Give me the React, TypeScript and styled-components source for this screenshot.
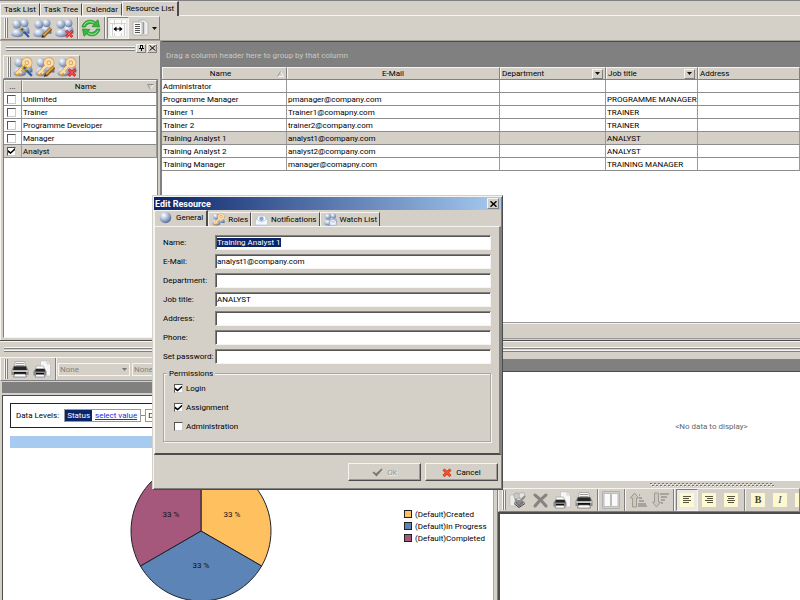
import React, { useEffect, useId, useRef, useState } from "react";
import styled, { createGlobalStyle, css } from "styled-components";

const face = "#d4d0c8";
const shadow = "#808080";
const dark = "#4c4c4c";
const light = "#f6f4f0";
const navy = "#0a246a";
const sky = "#a6caf0";

const GlobalStyle = createGlobalStyle`
  *, *::before, *::after { box-sizing: border-box; }
  html, body { margin: 0; }
  body, button, input, select {
    font-family: Roboto, "Liberation Sans", sans-serif;
    font-size: 8px;
    line-height: 11px;
    color: #000;
  }
  button, input, select { margin: 0; padding: 0; border-radius: 0; }
`;

const raised = css`
  border: 1px solid;
  border-color: ${light} ${shadow} ${shadow} ${light};
`;

/* ---------- window frame ---------- */

const Window = styled.div`
  position: relative;
  display: grid;
  grid-template-rows: auto minmax(0, 301fr) minmax(0, 259fr);
  height: 100vh;
  overflow: hidden;
  background: ${face};
`;

const Upper = styled.div`
  display: grid;
  grid-template-columns: 160px minmax(0, 1fr);
  border-bottom: 1px solid ${dark};
`;

const Lower = styled.div`
  display: grid;
  grid-template-columns: minmax(0, 497fr) minmax(0, 303fr);
`;

const TopTabs = styled.div`
  display: flex;
  align-items: flex-end;
  height: 16px;
  border-top: 1px solid ${shadow};
  box-shadow: inset 0 -1px ${light};
`;

const TopTab = styled.button<{ $active?: boolean }>`
  height: ${(p) => (p.$active ? 15 : 13)}px;
  padding: ${(p) => (p.$active ? "0 3px 2px" : "0 3px")};
  border: 0;
  border-left: 1px solid ${light};
  border-right: ${(p) => (p.$active ? 2 : 1)}px solid ${dark};
  border-top: 1px solid ${light};
  border-bottom: ${(p) => (p.$active ? 0 : 1)}px solid ${light};
  background: ${face};
  white-space: nowrap;
`;

const ToolRow = styled.div`
  display: flex;
  height: 25px;
  border-bottom: 1px solid #a5a29b;
`;

const Toolbar = styled.div<{ $wide?: boolean }>`
  display: flex;
  align-items: center;
  width: ${(p) => (p.$wide ? "auto" : "max-content")};
  height: 24px;
  padding-right: 1px;
  overflow: hidden;
  ${raised}
`;

const Grip = styled.span`
  flex: none;
  width: 4px;
  height: 20px;
  margin: 0 1px 0 3px;
  border-left: 1px solid ${light};
  border-right: 1px solid ${shadow};
  box-shadow: inset 1px 0 ${shadow}, inset -1px 0 ${light};
`;

const ToolButton = styled.button<{ $pressed?: boolean }>`
  flex: none;
  display: grid;
  place-items: center;
  width: 22px;
  height: 22px;
  border: 1px solid ${(p) => (p.$pressed ? shadow : "transparent")};
  border-right-color: ${(p) => (p.$pressed ? light : "transparent")};
  border-bottom-color: ${(p) => (p.$pressed ? light : "transparent")};
  background: ${(p) => (p.$pressed ? "#ebe9e4" : "transparent")};
`;

const DropButton = styled.button`
  flex: none;
  display: grid;
  place-items: center;
  width: 7px;
  height: 22px;
  border: 0;
  background: none;
`;

const Divider = styled.span`
  flex: none;
  width: 2px;
  height: 22px;
  margin: 0 1px 0 2px;
  border-left: 1px solid ${shadow};
  border-right: 1px solid ${light};
`;

/* ---------- roles panel ---------- */

const RolesPane = styled.section`
  display: flex;
  flex-direction: column;
  min-height: 0;
  padding: 1px 2px 2px 2px;
  border-left: 1px solid ${light};
`;

const PaneCaption = styled.div`
  display: flex;
  align-items: center;
  gap: 1px;
  height: 12px;
  margin-bottom: 1px;
  padding-left: 3px;
  padding-right: 1px;
`;

const Ridge = styled.span`
  flex: 1;
  height: 5px;
  border-top: 1px solid ${light};
  border-bottom: 1px solid ${shadow};
  box-shadow: inset 0 1px ${shadow}, inset 0 -1px ${light};
`;

const CaptionButton = styled.button`
  display: grid;
  place-items: center;
  width: 10px;
  height: 9px;
  background: ${face};
  ${raised}
`;

const RolesBody = styled.div`
  flex: 1;
  min-height: 0;
  background: #fff;
  border: 1px solid ${shadow};
  border-bottom-color: ${light};
`;

const Table = styled.table`
  width: 100%;
  table-layout: fixed;
  border-collapse: separate;
  border-spacing: 0;
`;

const HeadCell = styled.th<{ $align?: string }>`
  height: 13px;
  padding: 0 2px;
  background: ${face};
  border-right: 1px solid ${shadow};
  border-bottom: 1px solid ${shadow};
  border-top: 1px solid ${light};
  box-shadow: inset 1px 0 ${light};
  font-weight: normal;
  text-align: ${(p) => p.$align || "left"};
`;

const HeadInner = styled.span`
  display: flex;
  align-items: center;
`;

const HeadText = styled.span<{ $center?: boolean }>`
  flex: 1;
  text-align: ${(p) => (p.$center ? "center" : "left")};
`;

const FilterButton = styled.button`
  display: grid;
  place-items: center;
  width: 11px;
  height: 10px;
  background: ${face};
  ${raised}
`;

const Cell = styled.td`
  height: 13px;
  padding: 0 0 0 1px;
  border-right: 1px solid #9a9a9a;
  border-bottom: 1px solid #8c8c8c;
  white-space: nowrap;
  overflow: hidden;
`;

const Row = styled.tr<{ $selected?: boolean }>`
  background: ${(p) => (p.$selected ? face : "#fff")};
`;

const CheckBox = styled.input.attrs({ type: "checkbox" })`
  appearance: none;
  flex: none;
  display: grid;
  place-items: center;
  width: 9px;
  height: 9px;
  background: #fff;
  border: 1px solid;
  border-color: #555 #ccc #ccc #555;
  &:checked::before {
    content: "";
    width: 7px;
    height: 6px;
    background: #000;
    clip-path: polygon(0 35%, 38% 65%, 100% 0, 100% 35%, 38% 100%, 0 70%);
  }
`;

const RoleCheck = styled(CheckBox)`
  margin-left: 2px;
`;

/* ---------- resource grid ---------- */

const GridPane = styled.section`
  display: flex;
  flex-direction: column;
  min-width: 0;
  min-height: 0;
  border-left: 2px solid ${shadow};
`;

const GroupBar = styled.div`
  display: flex;
  align-items: center;
  height: 26px;
  padding: 2px 4px 0;
  background: ${shadow};
  border-top: 1px solid ${dark};
  color: #cbc8c1;
`;

const GridBody = styled.div`
  flex: 1;
  background: #fff;
`;

const GridFooter = styled.div`
  height: 17px;
  margin-bottom: 1px;
  border-top: 1px solid #999;
  border-bottom: 1px solid #999;
  box-shadow: inset 0 1px ${light};
`;

/* ---------- chart pane ---------- */

const ChartPane = styled.section`
  display: flex;
  flex-direction: column;
  min-width: 0;
  overflow: hidden;
  border-right: 2px solid ${face};
`;

const SplitRidge = styled.div`
  flex: none;
  display: flex;
  padding: 5px 0 5px 4px;
  border-top: 1px solid ${light};
`;

const ChartTools = styled.div`
  flex: none;
`;

const Combo = styled.span`
  position: relative;
  display: flex;
  flex: none;
  align-items: center;
  width: 72px;
  height: 13px;
  margin-right: 2px;
  border: 1px solid ${light};
  svg { position: absolute; right: 2px; pointer-events: none; }
`;

const ComboSelect = styled.select`
  appearance: none;
  width: 100%;
  padding-left: 1px;
  border: 0;
  background: transparent;
  &:disabled { color: #85837d; opacity: 1; }
`;

const GreyBar = styled.div<{ $tall?: boolean }>`
  flex: none;
  height: ${(p) => (p.$tall ? 12 : 11)}px;
  margin: ${(p) => (p.$tall ? "2px 0 0" : "1px 0 2px 2px")};
  background: ${shadow};
`;

const ChartArea = styled.div`
  flex: 1;
  min-height: 0;
  margin: 0 1px 0 2px;
  padding: 7px 8px 0 7px;
  overflow: hidden;
  background: #fff;
  border: 1px solid ${dark};
  border-bottom: 0;
  border-right-color: #aaa;
`;

const Levels = styled.div`
  display: flex;
  align-items: center;
  height: 25px;
  padding-left: 5px;
  border: 1px solid #222;
  overflow: hidden;
  white-space: nowrap;
`;

const LevelsLabel = styled.span`
  margin-right: 5px;
`;

const LevelBox = styled.span`
  display: flex;
  height: 13px;
  border: 1px solid #999;
`;

const LevelName = styled.span<{ $active?: boolean }>`
  padding: 0 2px;
  background: ${(p) => (p.$active ? navy : "#fff")};
  color: ${(p) => (p.$active ? "#fff" : "#111")};
`;

const LevelLink = styled.a`
  padding: 0 3px;
  color: #2a2adf;
`;

const LevelDash = styled.span`
  width: 4px;
  height: 1px;
  background: #888;
`;

const BlueBar = styled.div`
  height: 12px;
  margin-top: 8px;
  background: ${sky};
`;

const ChartRow = styled.div`
  display: flex;
  align-items: flex-start;
  gap: 132px;
  padding: 12px 0 0 120px;
  svg { flex: none; }
`;

const Legend = styled.ul`
  margin: 0;
  padding: 48px 0 0;
  list-style: none;
`;

const LegendItem = styled.li`
  display: flex;
  align-items: center;
  gap: 3px;
  height: 12px;
  white-space: nowrap;
`;

const Swatch = styled.span<{ $color: string }>`
  width: 8px;
  height: 8px;
  background: ${(p) => p.$color};
  border: 1px solid #222;
`;

/* ---------- details pane ---------- */

const DetailPane = styled.section`
  display: flex;
  flex-direction: column;
  min-width: 0;
  overflow: hidden;
  border-left: 1px solid ${shadow};
`;

const Empty = styled.div`
  display: grid;
  place-items: center;
  flex: none;
  height: 110px;
  padding-left: 125px;
  background: #fff;
  border-top: 1px solid ${dark};
  color: #666;
`;

const SplitGrip = styled.div`
  flex: none;
  display: flex;
  justify-content: center;
  align-items: center;
  height: 7px;
  padding-left: 125px;
`;

const NoteTools = styled.div`
  flex: none;
`;

const NoteArea = styled.div`
  flex: 1;
  background: #fff;
  border: 1px solid ${dark};
  border-width: 2px 0 0 2px;
`;

/* ---------- dialog ---------- */

const Dialog = styled.form`
  position: absolute;
  left: 152px;
  top: 195px;
  width: 351px;
  padding: 1px;
  background: ${face};
  border: 1px solid;
  border-color: ${face} ${dark} ${dark} ${face};
  box-shadow: inset 1px 1px ${light}, inset -1px -1px ${shadow};
`;

const TitleBar = styled.header`
  display: flex;
  align-items: center;
  justify-content: space-between;
  height: 13px;
  padding: 0 2px 0 1px;
  background: linear-gradient(90deg, ${navy}, ${sky});
`;

const Title = styled.h1`
  margin: 0;
  font-weight: bold;
  font-size: 9px;
  line-height: 12px;
  color: #fff;
`;

const TitleClose = styled(CaptionButton)`
  width: 12px;
  height: 11px;
`;

const DialogTabs = styled.div`
  display: flex;
  align-items: flex-end;
  height: 16px;
`;

const DialogTab = styled.button<{ $active?: boolean }>`
  display: flex;
  align-items: center;
  gap: ${(p) => (p.$active ? 4 : 3)}px;
  height: ${(p) => (p.$active ? 16 : 14)}px;
  padding: ${(p) => (p.$active ? "0 3px 2px 4px" : "0 2px 0 3px")};
  background: ${face};
  border: 0;
  border-top: 1px solid ${light};
  border-left: 1px solid ${light};
  border-right: ${(p) => (p.$active ? 2 : 1)}px solid ${dark};
  white-space: nowrap;
`;

const DialogPage = styled.div`
  padding: 8px 8px 11px;
  border: 1px solid;
  border-width: 1px 2px 2px 1px;
  border-color: ${light} ${shadow} ${dark} ${light};
`;

const Fields = styled.div`
  display: grid;
  grid-template-columns: 52px minmax(0, 1fr);
  row-gap: 4px;
  align-items: center;
`;

const FieldLabel = styled.label`
  white-space: nowrap;
`;

const TextBox = styled.input`
  width: 100%;
  height: 15px;
  padding: 0 1px;
  background: #fff;
  border: 1px solid;
  border-color: ${shadow} ${light} ${light} ${shadow};
  box-shadow: inset 1px 1px #555;
  outline: none;
  &::selection { background: ${navy}; color: #fff; }
`;

const Permissions = styled.fieldset`
  display: grid;
  gap: 8px;
  margin: 4px 0 0;
  padding: 4px 10px 9px;
  border: 1px solid #aaa7a0;
  box-shadow: 1px 1px ${light}, inset 1px 1px ${light};
`;

const PermissionsLegend = styled.legend`
  margin-left: -7px;
  padding: 0 2px;
  background: ${face};
`;

const CheckLabel = styled.label`
  display: flex;
  align-items: center;
  gap: 3px;
`;

const Actions = styled.footer`
  display: flex;
  justify-content: flex-end;
  gap: 4px;
  padding: 8px 3px 7px;
`;

const ActionButton = styled.button`
  display: flex;
  align-items: center;
  justify-content: center;
  gap: 4px;
  width: 73px;
  height: 18px;
  background: ${face};
  border: 1px solid;
  border-color: ${light} ${dark} ${dark} ${light};
  box-shadow: inset -1px -1px #9c9a94;
  &:disabled { color: #98958e; text-shadow: 1px 1px ${light}; }
`;

/* ---------- icons ---------- */

type Overlay = "wand" | "pencil" | "cross" | "none";

const OverlayMark = ({ kind }: { kind: Overlay }) => (
  <>
    {kind === "wand" && (
      <>
        <path d="M11 11l6 6" stroke="#2c5aa8" strokeWidth="2" />
        <path d="M10.500 7v6M7.500 10h6M8.500 8l4 4M12.500 8l-4 4" stroke="#c9a52a" strokeWidth="1" />
        <circle cx="10.500" cy="10" r="1.200" fill="#355a9c" />
      </>
    )}
    {kind === "pencil" && (
      <>
        <path d="M9.500 16.500L17 9" stroke="#8a5418" strokeWidth="3.400" />
        <path d="M10 15.500L16.500 9" stroke="#e0a550" strokeWidth="1.600" />
        <path d="M8 18l.8-2.800 2 2z" fill="#333" />
      </>
    )}
    {kind === "cross" && (
      <>
        <path d="M10.500 11l6 6M16.500 11l-6 6" stroke="#d82a2a" strokeWidth="2.600" />
        <path d="M11 11.500l5 5M16 11.500l-5 5" stroke="#ff7468" strokeWidth=".8" />
      </>
    )}
  </>
);

const Balls = () => {
  const id = useId();
  return (
    <>
      <defs>
        <radialGradient id={id} cx=".35" cy=".3" r=".8">
          <stop offset="0" stopColor="#fff" />
          <stop offset=".5" stopColor="#a9bad6" />
          <stop offset="1" stopColor="#5a6f98" />
        </radialGradient>
      </defs>
      <g fill={`url(#${id})`}>
        <path d="M8 11c-1-7 9-7 9.500 0v3H8z" />
        <circle cx="12.800" cy="4" r="3.700" />
        <path d="M.5 15.500c-1-8 11-8 11 0-2 2.500-9 2.500-11 0z" />
        <circle cx="5.500" cy="5" r="4.200" />
      </g>
    </>
  );
};

const PeopleIcon = ({ mark }: { mark: Overlay }) => (
  <svg width="19" height="19" viewBox="0 0 18 18" fill="none">
    <Balls />
    <OverlayMark kind={mark} />
  </svg>
);

const KeyIcon = ({ mark, size = 20 }: { mark: Overlay; size?: number }) => (
  <svg width={size} height={size} viewBox="0 0 18 18" fill="none">
    <Balls />
    <path d="M11 7L3 15M5.500 12.500l2.200 2.200M3 14.500l2 2" stroke="#d9953f" strokeWidth="3.400" />
    <circle cx="12.500" cy="5.200" r="3.200" fill="#e8e4da" stroke="#d9953f" strokeWidth="3.600" />
    <path d="M11 7L3 15M5.500 12.500l2 2" stroke="#fcdca6" strokeWidth="2.200" />
    <circle cx="12.500" cy="5.200" r="3.200" stroke="#fcdca6" strokeWidth="2.400" />
    <OverlayMark kind={mark} />
  </svg>
);

const RefreshIcon = () => (
  <svg width="20" height="18" viewBox="0 0 20 18">
    <path d="M1 8C2 2 9-1 14.500 3L17 .8 18.500 8 11 7.500l2-2C9.500 3.500 6 4.500 4.500 8z" fill="#35b83c" stroke="#168c22" strokeWidth=".7" />
    <path d="M19 10c-1 6-8 9-13.500 5L3 17.200 1.500 10 9 10.500l-2 2c3.500 2 7 1 8.500-2.500z" fill="#35b83c" stroke="#168c22" strokeWidth=".7" />
    <path d="M3 6.500C5 2.500 9 1.500 13 4M17 11.500c-2 4-6 5-10 2.500" fill="none" stroke="#9be59b" />
  </svg>
);

const FitIcon = () => (
  <svg width="18" height="18" viewBox="0 0 18 18">
    <path d="M1 1h16v16H1z" fill="#fbfbfb" />
    <path d="M1 4.500h16M5.500 1v5M12.500 1v5M5.500 14v3M12.500 14v3M3.500 4v13M15.500 4v13" stroke="#d2d2d2" />
    <path d="M5 10h8" stroke="#000" />
    <path d="M4.500 10L7.500 7.500v5zM13.500 10l-3-2.500v5z" fill="#000" />
  </svg>
);

const LayoutIcon = () => (
  <svg width="17" height="18" viewBox="0 0 17 18">
    <path d="M7 1h6l3 3v12H7z" fill="#eee" stroke="#aaa" strokeWidth=".8" />
    <path d="M1 3h9v13H1z" fill="#fafafa" stroke="#aaa" strokeWidth=".8" />
    <path d="M3 5.500h5M3 7.500h5M3 9.500h5M3 11.500h5M3 13.500h5" stroke="#555" />
    <path d="M11.500 3v12" stroke="#999" strokeWidth="1.500" />
  </svg>
);

const ArrowDown = ({ color = "#111" }: { color?: string }) => (
  <svg width="5" height="3" viewBox="0 0 5 3">
    <path d="M0 0h5L2.500 3z" fill={color} />
  </svg>
);

const SortMark = ({ up }: { up?: boolean }) => (
  <svg width="7" height="6" viewBox="0 0 7 6" fill="none">
    <path d={up ? "M.5 5.500L3.500.5l3 5z" : "M.5.5h6l-3 5z"} stroke={light} />
    <path d={up ? "M.5 5.500L3.500.5" : "M6.500.5H.5l3 5"} stroke="#8c8a84" />
  </svg>
);

const PinIcon = () => (
  <svg width="5" height="6" viewBox="0 0 5 6">
    <path d="M1 0h3v3H1zM0 3h5v1H0zM2 4h1v2H2z" fill="#000" />
    <path d="M2 1h1v2H2z" fill="#fff" />
  </svg>
);

const CloseIcon = ({ bold }: { bold?: boolean }) => (
  <svg width="7" height="6" viewBox="0 0 7 6">
    <path d="M.5.3l6 5.400M6.500.3l-6 5.400" stroke="#000" strokeWidth={bold ? 1.5 : 1} />
  </svg>
);

const PrinterIcon = () => (
  <svg width="18" height="18" viewBox="0 0 18 18">
    <path d="M4.500 1.500h9l1.500 5.500H3z" fill="#f7f7f7" stroke="#999" strokeWidth=".7" />
    <path d="M5 3.500h8M4.500 5.500h9" stroke="#888" strokeWidth=".8" />
    <path d="M2.500 6h13l2 4v5H.5v-5z" fill="#8a8a8a" />
    <path d="M3 6.500h12l.8 3.500H2.200z" fill="#262626" />
    <path d="M1 10.500h16v1.200H1z" fill="#e4e4e4" />
    <path d="M3 12h12v2.500H3z" fill="#111" />
    <path d="M3.500 14h11l1 3H2.500z" fill="#fff" stroke="#666" strokeWidth=".7" />
  </svg>
);

const PrintPreviewIcon = () => (
  <svg width="18" height="18" viewBox="0 0 18 18">
    <path d="M7.500.8h7L17.500 4v12h-10z" fill="#f7f7f7" stroke="#bbb" strokeWidth=".7" />
    <path d="M14 .8V4h3" fill="none" stroke="#bbb" strokeWidth=".7" />
    <path d="M3.500 6h7l1 3h-9z" fill="#fafafa" stroke="#999" strokeWidth=".6" />
    <path d="M2.500 8.500h9.500l1.500 3v4H.5v-4z" fill="#888" />
    <path d="M3 9h8.500l.7 2.500h-10z" fill="#222" />
    <path d="M3 13h8v1.500H3z" fill="#111" />
    <path d="M3 14.500h8l.8 2.500H2.200z" fill="#fff" stroke="#666" strokeWidth=".6" />
  </svg>
);

const ApplyIcon = () => (
  <svg width="18" height="18" viewBox="0 0 18 18">
    <path d="M1 4h10v11H1z" fill="#ececec" stroke="#bbb" strokeWidth=".7" />
    <circle cx="8" cy="5" r="3.200" fill="#c9c9c9" stroke="#999" strokeWidth=".6" />
    <circle cx="13" cy="4.500" r="3" fill="#e5e5e5" stroke="#999" strokeWidth=".6" />
    <path d="M5 11l5-2 6 2-6 5z" fill="#777" />
    <path d="M6 8l4 4 6-7" fill="none" stroke="#8d8d8d" strokeWidth="2" />
    <path d="M5 12.500l5 4 6-4" fill="none" stroke="#444" />
  </svg>
);

const GreyCross = () => (
  <svg width="15" height="15" viewBox="0 0 15 15">
    <path d="M2 2c4 3 7 6 11 11M13 2C9 5 5 9 2 13" fill="none" stroke="#868480" strokeWidth="3" strokeLinecap="round" />
  </svg>
);

const ColumnsIcon = () => (
  <svg width="18" height="18" viewBox="0 0 18 18">
    <path d="M.5.5h17v17H.5z" fill="#d0d0d0" stroke="#b0b0b0" />
    <path d="M2 2.500h6.500v13H2zM9.500 2.500H16v13H9.500z" fill="#fafafa" stroke="#bbb" />
  </svg>
);

const SortIcon = ({ down }: { down?: boolean }) => (
  <svg width="19" height="18" viewBox="0 0 19 18" fill="none">
    <path d={down ? "M3.500 2v9H1.500l4 5 4-5h-2V2z" : "M3.500 16V7H1.500l4-5 4 5h-2v9z"} fill="#ccc8c0" stroke="#9d9b95" />
    <path
      d={down ? "M9 3h9M10 6h6M10 9h4M10 12h2" : "M10 4h1M10 7h3M10 10h5M9 13h8M9 15h9"}
      stroke="#a7a49e"
      strokeWidth="2"
    />
  </svg>
);

const AlignIcon = ({ shift }: { shift: number }) => (
  <svg width="14" height="14" viewBox="0 0 14 14">
    <path d="M0 0h14v14H0z" fill="#fdf8cf" />
    <path
      d={`M3 3.500h8M${3 + shift} 5.500h6M3 7.500h8M${3 + shift} 9.500h6`}
      stroke="#56543f"
    />
  </svg>
);

const Letter = styled.span<{ $variant: "b" | "i" | "u" }>`
  width: 14px;
  height: 14px;
  background: #fdf8cf;
  color: #44422f;
  font: 10px/14px "Liberation Serif", serif;
  font-weight: ${(p) => (p.$variant === "b" ? "bold" : "normal")};
  font-style: ${(p) => (p.$variant === "i" ? "italic" : "normal")};
  text-decoration: ${(p) => (p.$variant === "u" ? "underline" : "none")};
  text-align: center;
`;

const GripDots = () => (
  <svg width="124" height="4" viewBox="0 0 124 4">
    <path d="M0 .5h124" stroke="#77756f" strokeDasharray="2 2" />
    <path d="M2 2.500h122" stroke="#77756f" strokeDasharray="2 2" />
    <path d="M1 1.500h123M3 3.500h121" stroke="#fff" strokeDasharray="1 3" />
  </svg>
);

const SphereIcon = () => (
  <svg width="13" height="13" viewBox="0 0 13 13">
    <defs>
      <radialGradient id="sphere" cx=".35" cy=".3" r=".75">
        <stop offset="0" stopColor="#fff" />
        <stop offset=".45" stopColor="#b4c2dc" />
        <stop offset="1" stopColor="#4f658f" />
      </radialGradient>
    </defs>
    <circle cx="6.500" cy="6.500" r="5.800" fill="url(#sphere)" />
  </svg>
);

const MailIcon = () => (
  <svg width="13" height="12" viewBox="0 0 13 12">
    <path d="M.5 5l6-4.500 6 4.500v6H.5z" fill="#dbe5f5" stroke="#a9bad8" strokeWidth=".7" />
    <path d="M3 2.500h7v4H3z" fill="#fff" />
    <circle cx="6.500" cy="4.800" r="2.200" fill="#8ba5d6" />
    <path d="M.5 5l6 3 6-3v6H.5z" fill="#f5f8fd" stroke="#b5c4de" strokeWidth=".7" />
  </svg>
);

const WatchIcon = () => (
  <svg width="13" height="13" viewBox="0 0 18 18">
    <Balls />
    <path d="M8 9h9v8H8z" fill="#eef3fb" stroke="#90a6cf" />
    <path d="M8 9l4.500 4L17 9" fill="none" stroke="#90a6cf" />
  </svg>
);

const OkIcon = () => (
  <svg width="11" height="9" viewBox="0 0 11 9">
    <path d="M.5 4.500L2 3.500l2 2L9.500.5l1 1L4.500 8.500z" fill="#77756f" />
  </svg>
);

const CancelIcon = () => (
  <svg width="10" height="9" viewBox="0 0 10 9">
    <path d="M1.500 1.500l7 6.500M8.500 1.500l-7 6.500" stroke="#b52d14" strokeWidth="3" />
    <path d="M1.500 1.500l7 6.500M8.500 1.500l-7 6.500" stroke="#f05530" strokeWidth="1.800" />
  </svg>
);

const PieChart = () => (
  <svg width="142" height="142" viewBox="-71 -71 142 142" role="img" aria-label="Tasks by status">
    <g stroke="#20202a" strokeWidth="1">
      <path d="M0 0V-70A70 70 0 0 1 60.600 35z" fill="#ffc060" />
      <path d="M0 0L60.600 35A70 70 0 0 1-60.600 35z" fill="#5d84b6" />
      <path d="M0 0L-60.600 35A70 70 0 0 1 0-70z" fill="#a6587c" />
    </g>
    <g fill="#111" fontSize="8" textAnchor="middle">
      <text x="31" y="-14">33 %</text>
      <text x="0" y="37">33 %</text>
      <text x="-30" y="-14">33 %</text>
    </g>
  </svg>
);

/* ---------- data ---------- */

const roles = ["Unlimited", "Trainer", "Programme Developer", "Manager", "Analyst"];

const resources = [
  ["Administrator", "", "", "", ""],
  ["Programme Manager", "pmanager@company.com", "", "PROGRAMME MANAGER", ""],
  ["Trainer 1", "Trainer1@comapny.com", "", "TRAINER", ""],
  ["Trainer 2", "trainer2@company.com", "", "TRAINER", ""],
  ["Training Analyst 1", "analyst1@company.com", "", "ANALYST", ""],
  ["Training Analyst 2", "analyst2@company.com", "", "ANALYST", ""],
  ["Training Manager", "manager@comapny.com", "", "TRAINING MANAGER", ""],
];

const fields = [
  { id: "name", label: "Name:", value: "Training Analyst 1" },
  { id: "email", label: "E-Mail:", value: "analyst1@company.com" },
  { id: "department", label: "Department:", value: "" },
  { id: "job", label: "Job title:", value: "ANALYST" },
  { id: "address", label: "Address:", value: "" },
  { id: "phone", label: "Phone:", value: "" },
  { id: "password", label: "Set password:", value: "" },
];

const legend = [
  { label: "(Default)Created", color: "#ffc060" },
  { label: "(Default)In Progress", color: "#5d84b6" },
  { label: "(Default)Completed", color: "#a6587c" },
];

const views = ["Task List", "Task Tree", "Calendar", "Resource List"];

/* ---------- sections ---------- */

const RolesPanel = () => (
  <RolesPane>
    <PaneCaption>
      <Ridge />
      <CaptionButton aria-label="Pin"><PinIcon /></CaptionButton>
      <CaptionButton aria-label="Close panel"><CloseIcon /></CaptionButton>
    </PaneCaption>
    <Toolbar>
      <Grip />
      <ToolButton aria-label="New role"><KeyIcon mark="wand" /></ToolButton>
      <ToolButton aria-label="Edit role"><KeyIcon mark="pencil" /></ToolButton>
      <ToolButton aria-label="Delete role"><KeyIcon mark="cross" /></ToolButton>
    </Toolbar>
    <RolesBody>
      <Table>
        <colgroup>
          <col style={{ width: 18 }} />
          <col />
        </colgroup>
        <thead>
          <tr>
            <HeadCell $align="center">...</HeadCell>
            <HeadCell>
              <HeadInner>
                <HeadText $center>Name</HeadText>
                <SortMark />
              </HeadInner>
            </HeadCell>
          </tr>
        </thead>
        <tbody>
          {roles.map((role) => (
            <Row key={role} $selected={role === "Analyst"}>
              <Cell>
                <RoleCheck aria-label={role} defaultChecked={role === "Analyst"} />
              </Cell>
              <Cell>{role}</Cell>
            </Row>
          ))}
        </tbody>
      </Table>
    </RolesBody>
  </RolesPane>
);

const ResourceGrid = () => (
  <GridPane>
    <GroupBar>Drag a column header here to group by that column</GroupBar>
    <GridBody>
      <Table>
        <colgroup>
          <col style={{ width: 125 }} />
          <col style={{ width: 213 }} />
          <col style={{ width: 106 }} />
          <col style={{ width: 92 }} />
          <col />
        </colgroup>
        <thead>
          <tr>
            <HeadCell>
              <HeadInner>
                <HeadText $center>Name</HeadText>
                <SortMark up />
              </HeadInner>
            </HeadCell>
            <HeadCell $align="center">E-Mail</HeadCell>
            {["Department", "Job title"].map((title) => (
              <HeadCell key={title}>
                <HeadInner>
                  <HeadText>{title}</HeadText>
                  <FilterButton aria-label={`Filter ${title}`}><ArrowDown /></FilterButton>
                </HeadInner>
              </HeadCell>
            ))}
            <HeadCell>Address</HeadCell>
          </tr>
        </thead>
        <tbody>
          {resources.map((resource, index) => (
            <Row key={resource[0]} $selected={index === 4}>
              {resource.map((value, column) => (
                <Cell key={column}>{value}</Cell>
              ))}
            </Row>
          ))}
        </tbody>
      </Table>
    </GridBody>
    <GridFooter />
  </GridPane>
);

const ChartPanel = () => (
  <ChartPane>
    <SplitRidge><Ridge /></SplitRidge>
    <ChartTools>
      <Toolbar $wide>
        <Grip />
        <ToolButton aria-label="Print"><PrinterIcon /></ToolButton>
        <ToolButton aria-label="Print preview"><PrintPreviewIcon /></ToolButton>
        <Divider />
        {["Series", "Category"].map((name) => (
          <Combo key={name}>
            <ComboSelect aria-label={name} disabled>
              <option>None</option>
            </ComboSelect>
            <ArrowDown color="#77756f" />
          </Combo>
        ))}
      </Toolbar>
    </ChartTools>
    <GreyBar />
    <ChartArea>
      <Levels>
        <LevelsLabel>Data Levels:</LevelsLabel>
        <LevelBox>
          <LevelName $active>Status</LevelName>
          <LevelLink href="#status">select value</LevelLink>
        </LevelBox>
        <LevelDash />
        <LevelBox>
          <LevelName>D</LevelName>
        </LevelBox>
      </Levels>
      <BlueBar />
      <ChartRow>
        <PieChart />
        <Legend>
          {legend.map((item) => (
            <LegendItem key={item.label}>
              <Swatch $color={item.color} />
              {item.label}
            </LegendItem>
          ))}
        </Legend>
      </ChartRow>
    </ChartArea>
  </ChartPane>
);

const DetailPanel = () => (
  <DetailPane>
    <SplitRidge><Ridge /></SplitRidge>
    <GreyBar $tall />
    <Empty>&lt;No data to display&gt;</Empty>
    <SplitGrip><GripDots /></SplitGrip>
    <NoteTools>
      <Toolbar $wide>
        <Grip />
        <ToolButton aria-label="Apply"><ApplyIcon /></ToolButton>
        <ToolButton aria-label="Discard"><GreyCross /></ToolButton>
        <ToolButton aria-label="Print preview"><PrintPreviewIcon /></ToolButton>
        <ToolButton aria-label="Print"><PrinterIcon /></ToolButton>
        <Divider />
        <ToolButton aria-label="Columns"><ColumnsIcon /></ToolButton>
        <Divider />
        <ToolButton aria-label="Sort ascending"><SortIcon /></ToolButton>
        <ToolButton aria-label="Sort descending"><SortIcon down /></ToolButton>
        <Divider />
        <ToolButton aria-label="Align left" $pressed><AlignIcon shift={0} /></ToolButton>
        <ToolButton aria-label="Align right"><AlignIcon shift={2} /></ToolButton>
        <ToolButton aria-label="Align center"><AlignIcon shift={1} /></ToolButton>
        <Divider />
        <ToolButton aria-label="Bold"><Letter $variant="b">B</Letter></ToolButton>
        <ToolButton aria-label="Italic"><Letter $variant="i">I</Letter></ToolButton>
        <ToolButton aria-label="Underline"><Letter $variant="u" /></ToolButton>
      </Toolbar>
    </NoteTools>
    <NoteArea />
  </DetailPane>
);

const EditResource = () => {
  const nameRef = useRef<HTMLInputElement>(null);
  useEffect(() => {
    nameRef.current?.focus();
    nameRef.current?.select();
  }, []);
  return (
    <Dialog role="dialog" aria-label="Edit Resource" onSubmit={(e) => e.preventDefault()}>
      <TitleBar>
        <Title>Edit Resource</Title>
        <TitleClose type="button" aria-label="Close"><CloseIcon bold /></TitleClose>
      </TitleBar>
      <DialogTabs>
        <DialogTab type="button" $active><SphereIcon />General</DialogTab>
        <DialogTab type="button"><KeyIcon mark="none" size={13} />Roles</DialogTab>
        <DialogTab type="button"><MailIcon />Notifications</DialogTab>
        <DialogTab type="button"><WatchIcon />Watch List</DialogTab>
      </DialogTabs>
      <DialogPage>
        <Fields>
          {fields.map((field, index) => (
            <React.Fragment key={field.id}>
              <FieldLabel htmlFor={field.id}>{field.label}</FieldLabel>
              <TextBox
                id={field.id}
                ref={index === 0 ? nameRef : undefined}
                type={field.id === "password" ? "password" : "text"}
                defaultValue={field.value}
              />
            </React.Fragment>
          ))}
        </Fields>
        <Permissions>
          <PermissionsLegend>Permissions</PermissionsLegend>
          <CheckLabel><CheckBox defaultChecked />Login</CheckLabel>
          <CheckLabel><CheckBox defaultChecked />Assignment</CheckLabel>
          <CheckLabel><CheckBox />Administration</CheckLabel>
        </Permissions>
      </DialogPage>
      <Actions>
        <ActionButton type="submit" disabled><OkIcon />Ok</ActionButton>
        <ActionButton type="button"><CancelIcon />Cancel</ActionButton>
      </Actions>
    </Dialog>
  );
};

export default function App() {
  const [view, setView] = useState("Resource List");
  return (
    <Window>
      <GlobalStyle />
      <div>
        <TopTabs>
          {views.map((name) => (
            <TopTab key={name} $active={name === view} onClick={() => setView(name)}>
              {name}
            </TopTab>
          ))}
        </TopTabs>
        <ToolRow>
          <Toolbar>
            <Grip />
            <ToolButton aria-label="New resource"><PeopleIcon mark="wand" /></ToolButton>
            <ToolButton aria-label="Edit resource"><PeopleIcon mark="pencil" /></ToolButton>
            <ToolButton aria-label="Delete resource"><PeopleIcon mark="cross" /></ToolButton>
            <Divider />
            <ToolButton aria-label="Refresh"><RefreshIcon /></ToolButton>
            <Divider />
            <ToolButton aria-label="Fit columns" $pressed><FitIcon /></ToolButton>
            <ToolButton aria-label="Layout"><LayoutIcon /></ToolButton>
            <DropButton aria-label="Layout options"><ArrowDown /></DropButton>
          </Toolbar>
        </ToolRow>
      </div>
      <Upper>
        <RolesPanel />
        <ResourceGrid />
      </Upper>
      <Lower>
        <ChartPanel />
        <DetailPanel />
      </Lower>
      <EditResource />
    </Window>
  );
}
